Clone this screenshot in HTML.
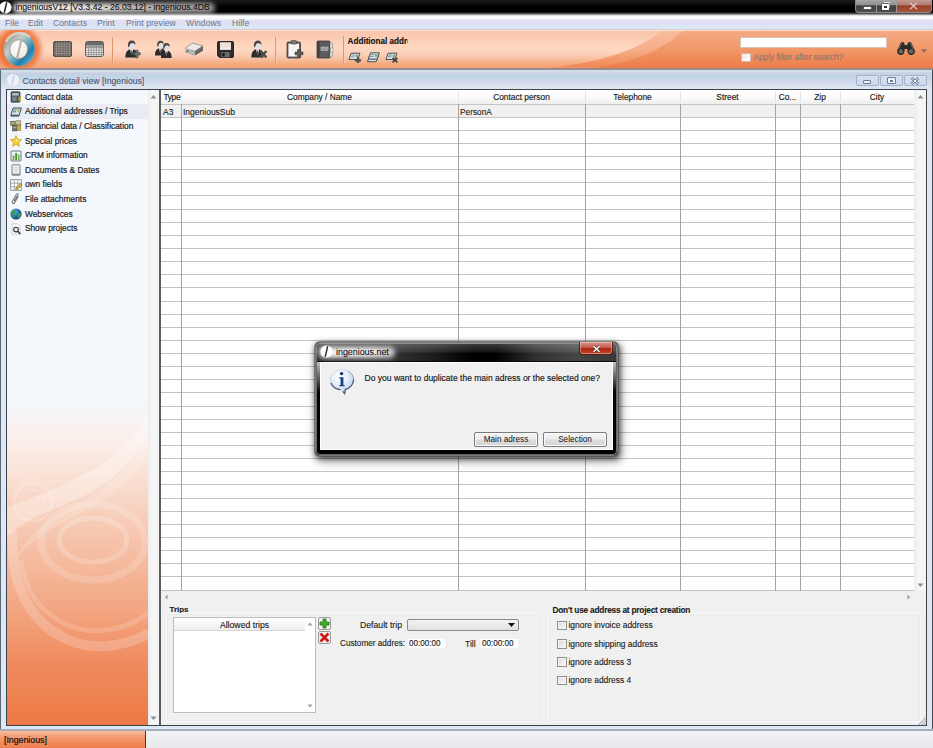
<!DOCTYPE html>
<html>
<head>
<meta charset="utf-8">
<title>ingeniousV12</title>
<style>
*{box-sizing:border-box;margin:0;padding:0}
html,body{width:933px;height:748px;overflow:hidden}
body{position:relative;-webkit-font-smoothing:antialiased;background:#eef0f2;font-family:"Liberation Sans",sans-serif;font-size:8.6px;color:#1a1a1a}
.a{position:absolute}
.t{position:absolute;white-space:nowrap;line-height:12px;-webkit-text-stroke:0.12px currentColor}
#titlebar{left:0;top:0;width:933px;height:16px;background:linear-gradient(#1a1a1a 0,#0a0a0a 5px,#000 6px,#000 12px,#2e2e2e 13px,#7d7d7d 14.2px,#d6d6d8 15.3px,#fbfbfd 16px)}
#titletext{left:15.5px;top:1px;font-size:8.65px;color:#1a1010}
#menubar{left:0;top:16px;width:933px;height:14px;background:linear-gradient(#fdfdfe 0,#f8f9fc 3px,#e2e2f6 4px,#dfdef5 8px,#dbe6f4 9px,#dce7f5 12.6px,#c9c9cc 13.2px,#f0d4d0 14px)}
#menubar span{position:absolute;top:1px;font-size:8.65px;line-height:12px;color:#6b788c;white-space:nowrap}
#toolbar{left:0;top:30px;width:933px;height:38px;overflow:hidden;background:#f5a57c}
#mdi{left:0;top:69.5px;width:933px;height:661px;background:#dde7f5}
#status{left:0;top:730.8px;width:933px;height:17.2px;background:linear-gradient(#f2f3f5,#e6e8eb)}
#statusl{left:0;top:730.8px;width:145.6px;height:17.2px;background:linear-gradient(#f9bd9d 0,#f29468 45%,#ee7f4d 100%);border-right:1px solid #3a3a3a}
#leftpanel{left:7.2px;top:90px;width:140.8px;height:634.8px;overflow:hidden;background:linear-gradient(#f4f7fc 0,#f4f7fc 49%,#fbeee8 55.7%,#f9dccd 62.6%,#f6c7b0 69.5%,#f4b596 76.5%,#f2a17b 83.4%,#ef8b5e 90.4%,#ed7e4c 97.3%,#ed7a47 100%)}
.it{position:absolute;left:0;width:142px;height:15px;font-size:8.4px;line-height:15px;padding-left:17.7px;color:#1c1c1c;white-space:nowrap;-webkit-text-stroke:0.2px #1c1c1c}
.hd{position:absolute;top:90px;height:13px;font-size:8.35px;line-height:14px;text-align:center;color:#1a1a1a;white-space:nowrap;-webkit-text-stroke:0.15px #1a1a1a}
.hl{position:absolute;background:#c4c4c4;height:1px}
.vl{position:absolute;background:#a4a4a4;width:1px}
.cb{position:absolute;width:9.8px;height:9.6px;border:1px solid #8e8f8f;background:linear-gradient(135deg,#d6d6d6 0,#e6e6e6 40%,#fbfbfb 100%);box-shadow:inset 0 0 0 1px #f4f4f4}
.btn{position:absolute;height:15px;border:1px solid #7a7a7a;border-radius:2px;background:linear-gradient(#f4f4f4 0,#ececec 48%,#dedede 52%,#d2d2d2 100%);font-size:8.2px;line-height:13px;text-align:center;color:#111;box-shadow:inset 0 0 0 1px #fbfbfb}
</style>
</head>
<body>
<div id="titlebar" class="a"></div>
<div class="a" style="left:13px;top:2.5px;width:202px;height:10px;border-radius:5px;filter:blur(2.5px);background:linear-gradient(90deg,rgba(255,255,255,0.98) 0,rgba(255,255,255,0.95) 30%,rgba(255,255,255,0.75) 60%,rgba(255,255,255,0.6) 100%)"></div>
<svg class="a" style="left:-1px;top:1px" width="13" height="13" viewBox="0 0 13 13"><circle cx="6.5" cy="6.5" r="6" fill="#fff"/><path d="M7.8 1.2 L5.2 11.8" stroke="#222" stroke-width="1.5"/></svg>
<div id="titletext" class="t">ingeniousV12 [V3.3.42 - 26.03.12] - ingenious.4DB</div>
<div class="a" style="left:855px;top:0;width:77px;height:12.5px;border:1px solid #8a8a8a;border-top:none;border-radius:0 0 4px 4px;background:linear-gradient(#a9a9a9 0,#8c8c8c 42%,#3f3f3f 48%,#4d4d4d 100%)"></div>
<div class="a" style="left:896px;top:0;width:35px;height:11.5px;border-radius:0 0 3px 0;background:linear-gradient(#c39a92 0,#ad7a70 42%,#9a3f2a 48%,#a8523a 100%)"></div>
<div class="a" style="left:876px;top:0;width:1px;height:12px;background:#9a9a9a"></div><div class="a" style="left:896px;top:0;width:1px;height:12px;background:#9a9a9a"></div>
<div class="a" style="left:862.5px;top:5.5px;width:9px;height:4px;background:#fff;border:1px solid #555;border-radius:1px"></div>
<div class="a" style="left:884px;top:2px;width:6px;height:6px;border:1px solid #e8e8e8;background:#777"></div><div class="a" style="left:881.5px;top:3.5px;width:7.5px;height:6.5px;border:2px solid #fff;background:#333;box-shadow:0 0 0 0.5px #444"></div>
<svg class="a" style="left:909px;top:2px" width="9" height="8" viewBox="0 0 9 8"><path d="M1 0.8 L8 7.2 M8 0.8 L1 7.2" stroke="#e9c3b8" stroke-width="1.2"/></svg>
<div id="menubar" class="a"><span style="left:5px">File</span><span style="left:28px">Edit</span><span style="left:53px">Contacts</span><span style="left:97px">Print</span><span style="left:126px">Print preview</span><span style="left:186px">Windows</span><span style="left:232px">Hilfe</span></div>
<div id="toolbar" class="a"><svg class="a" style="left:0;top:0" width="933" height="39" viewBox="0 0 933 39">
<defs>
<linearGradient id="tl" x1="0" y1="0" x2="0" y2="1"><stop offset="0" stop-color="#f7cdc2"/><stop offset="0.04" stop-color="#f9c6ae"/><stop offset="0.16" stop-color="#fbcab1"/><stop offset="0.32" stop-color="#fdd2ba"/><stop offset="0.5" stop-color="#fed7c0"/><stop offset="0.63" stop-color="#fbcfb7"/><stop offset="0.74" stop-color="#f8bfa0"/><stop offset="0.85" stop-color="#f6ae84"/><stop offset="0.93" stop-color="#f5a574"/><stop offset="0.97" stop-color="#f4a58a"/><stop offset="1" stop-color="#f2a594"/></linearGradient>
<linearGradient id="tr" x1="0" y1="0" x2="0" y2="1"><stop offset="0" stop-color="#f5ab86"/><stop offset="0.5" stop-color="#f19768"/><stop offset="1" stop-color="#ec7b47"/></linearGradient>
<linearGradient id="tm" x1="0" y1="0" x2="0" y2="1"><stop offset="0" stop-color="#f8bd9f"/><stop offset="0.5" stop-color="#f6ad88"/><stop offset="0.93" stop-color="#ef8a58"/><stop offset="1" stop-color="#f09a80"/></linearGradient>
</defs>
<rect width="933" height="39" fill="url(#tr)"/>
<path d="M0 0 H684 C660 22 630 34 585 39 H0 Z" fill="url(#tm)"/>
<path d="M0 0 H662 C640 20 600 33 540 39 H0 Z" fill="url(#tl)"/>
<rect y="0" width="933" height="1" fill="#fde6da" opacity="0.8"/>
</svg></div>
<svg class="a" style="left:0;top:30px" width="48" height="38" viewBox="0 0 48 38">
<defs>
<radialGradient id="og" cx="18" cy="19.5" r="27" gradientUnits="userSpaceOnUse"><stop offset="0.6" stop-color="#ee7336"/><stop offset="0.74" stop-color="#f0814a" stop-opacity="0.95"/><stop offset="0.9" stop-color="#f4a07a" stop-opacity="0.5"/><stop offset="1" stop-color="#f8bfa0" stop-opacity="0"/></radialGradient>
<linearGradient id="rg" x1="0.1" y1="0.1" x2="0.9" y2="0.9"><stop offset="0" stop-color="#8d8f86"/><stop offset="0.3" stop-color="#c9cdc8"/><stop offset="0.5" stop-color="#7fb6c4"/><stop offset="0.75" stop-color="#1e7fae"/><stop offset="1" stop-color="#6fb0c8"/></linearGradient>
<radialGradient id="wg" cx="0.45" cy="0.4" r="0.7"><stop offset="0" stop-color="#ffffff"/><stop offset="0.7" stop-color="#f2efe9"/><stop offset="1" stop-color="#c9c7c0"/></radialGradient>
</defs>
<rect x="0" y="0" width="48" height="38" fill="url(#og)"/>
<ellipse cx="19.3" cy="19.3" rx="15.6" ry="17" fill="url(#rg)"/>
<ellipse cx="19.3" cy="19.3" rx="15.6" ry="17" fill="none" stroke="#b0a090" stroke-opacity="0.6" stroke-width="1"/>
<path d="M6 12 A15 15 0 0 1 30 7" fill="none" stroke="#e8ebe8" stroke-opacity="0.6" stroke-width="2.5"/>
<ellipse cx="18.7" cy="19.3" rx="9" ry="9.6" fill="url(#wg)" stroke="#8a8a84" stroke-width="0.8"/>
<path d="M21.2 10.5 L17 29" stroke="#b9b6ae" stroke-width="2.2"/>
</svg>
<svg class="a" style="left:53px;top:41px" width="19" height="16" viewBox="0 0 19 16">
<rect x="0.5" y="0.5" width="18" height="15" rx="1.5" fill="#6a6460" stroke="#55504c"/>
<g stroke="#9a9490" stroke-width="0.8" opacity="0.9"><path d="M3.5 1 V15 M6.1 1 V15 M8.7 1 V15 M11.3 1 V15 M13.9 1 V15 M16.5 1 V15"/><path d="M1 3.3 H18 M1 5.6 H18 M1 7.9 H18 M1 10.2 H18 M1 12.5 H18"/></g>
</svg>
<svg class="a" style="left:85px;top:41px" width="19" height="16" viewBox="0 0 19 16">
<rect x="0.5" y="0.5" width="18" height="15" rx="2" fill="#f4f1ee" stroke="#5a5a5a"/>
<rect x="1" y="1" width="17" height="3.2" fill="#6a6a6a"/>
<rect x="1" y="4.2" width="17" height="2.4" fill="#9b9b9b"/>
<g stroke="#8a8a8a" stroke-width="0.8"><path d="M3.6 4.2 V15 M6.2 4.2 V15 M8.8 4.2 V15 M11.4 4.2 V15 M14 4.2 V15 M16.4 4.2 V15"/><path d="M1 6.8 H18 M1 9.2 H18 M1 11.6 H18 M1 13.6 H18"/></g>
</svg>
<div class="a" style="left:112px;top:37px;width:1px;height:26px;background:#e59572"></div><div class="a" style="left:113px;top:37px;width:1px;height:26px;background:#fbd2be;opacity:0.7"></div><div class="a" style="left:275px;top:37px;width:1px;height:26px;background:#e59572"></div><div class="a" style="left:276px;top:37px;width:1px;height:26px;background:#fbd2be;opacity:0.7"></div><div class="a" style="left:343px;top:36px;width:1px;height:27px;background:#e59572"></div><div class="a" style="left:344px;top:36px;width:1px;height:27px;background:#fbd2be;opacity:0.7"></div>
<svg class="a" style="left:125px;top:40px" width="16" height="19" viewBox="0 0 16 19"><path d="M0.4 17.4 C0.2 12.6 2.2 10 5 9.2 L6.6 11.5 L8.2 9.2 C11 10 12.8 12.6 12.6 17.4 Z" fill="#2b2b2b"/>
<path d="M5 9.2 L6.6 15.5 L8.2 9.2 L6.6 10.4 Z" fill="#ececec"/>
<path d="M6.2 10.6 L7 10.6 L7.3 14 L6.6 15.2 L5.9 14 Z" fill="#555"/>
<ellipse cx="6.7" cy="5.2" rx="3.5" ry="4.2" fill="#e4e2e0"/>
<path d="M3.1 6.4 C2.4 2.4 4.4 0.5 6.9 0.5 C9.6 0.5 10.8 2.6 10.2 5 C9.6 3.6 8.4 3 6.8 3.2 C5.4 3.4 4.6 4.4 4.4 6.6 L3.6 7.6 Z" fill="#4e4642"/>
<path d="M10.6 10.2 H13 V12.6 H15.2 V15 H13 V17.8 H10.6 V15 H8.4 V12.6 H10.6 Z" fill="#66736c" stroke="#3e4642" stroke-width="0.6"/></svg>
<svg class="a" style="left:153.5px;top:40px" width="19" height="19" viewBox="0 0 19 19">
<g transform="translate(0.6,0.2) scale(0.88)"><path d="M0.4 17.4 C0.2 12.6 2.2 10 5 9.2 L6.6 11.5 L8.2 9.2 C11 10 12.8 12.6 12.6 17.4 Z" fill="#2b2b2b"/>
<path d="M5 9.2 L6.6 15.5 L8.2 9.2 L6.6 10.4 Z" fill="#ececec"/>
<path d="M6.2 10.6 L7 10.6 L7.3 14 L6.6 15.2 L5.9 14 Z" fill="#555"/>
<ellipse cx="6.7" cy="5.2" rx="3.5" ry="4.2" fill="#e4e2e0"/>
<path d="M3.1 6.4 C2.4 2.4 4.4 0.5 6.9 0.5 C9.6 0.5 10.8 2.6 10.2 5 C9.6 3.6 8.4 3 6.8 3.2 C5.4 3.4 4.6 4.4 4.4 6.6 L3.6 7.6 Z" fill="#4e4642"/></g>
<g transform="translate(6.6,2.6) scale(0.88)"><path d="M0.4 17.4 C0.2 12.6 2.2 10 5 9.2 L6.6 11.5 L8.2 9.2 C11 10 12.8 12.6 12.6 17.4 Z" fill="#2b2b2b"/>
<path d="M5 9.2 L6.6 15.5 L8.2 9.2 L6.6 10.4 Z" fill="#ececec"/>
<path d="M6.2 10.6 L7 10.6 L7.3 14 L6.6 15.2 L5.9 14 Z" fill="#555"/>
<ellipse cx="6.7" cy="5.2" rx="3.5" ry="4.2" fill="#e4e2e0"/>
<path d="M3.1 6.4 C2.4 2.4 4.4 0.5 6.9 0.5 C9.6 0.5 10.8 2.6 10.2 5 C9.6 3.6 8.4 3 6.8 3.2 C5.4 3.4 4.6 4.4 4.4 6.6 L3.6 7.6 Z" fill="#4e4642"/></g></svg>
<svg class="a" style="left:184px;top:42px" width="20" height="14" viewBox="0 0 20 14">
<path d="M1 6.5 L8.5 1 L19 4 L19 8.5 L11 13.2 L1 10 Z" fill="#4a4a4a"/>
<path d="M1 6.5 L8.5 1 L19 4 L11 9.2 Z" fill="#eceae8" stroke="#8a8a8a" stroke-width="0.6"/>
<path d="M1 6.5 L11 9.2 L11 13.2 L1 10 Z" fill="#b9b7b4"/>
<path d="M11 9.2 L19 4 L19 8.5 L11 13.2 Z" fill="#6a6866"/>
<circle cx="3.5" cy="9.2" r="0.9" fill="#5a5a5a"/>
</svg>
<svg class="a" style="left:217px;top:41px" width="17" height="17" viewBox="0 0 17 17">
<path d="M1.5 0.5 H15.5 A1 1 0 0 1 16.5 1.5 V15.5 A1 1 0 0 1 15.5 16.5 H2.5 L0.5 14.5 V1.5 A1 1 0 0 1 1.5 0.5 Z" fill="#2c2c2c" stroke="#111" stroke-width="0.8"/>
<rect x="3" y="1.3" width="11" height="7.6" fill="#f6e9e2"/>
<path d="M3 3.5 H14 M3 5.5 H14" stroke="#e4cfc4" stroke-width="0.6"/>
<rect x="4.2" y="11" width="8.4" height="5.2" fill="#6d6d6d"/>
<rect x="5.3" y="11.8" width="2.4" height="3.6" fill="#1a1a1a"/>
</svg>
<svg class="a" style="left:250.5px;top:40px" width="17" height="19" viewBox="0 0 17 19"><path d="M0.4 17.4 C0.2 12.6 2.2 10 5 9.2 L6.6 11.5 L8.2 9.2 C11 10 12.8 12.6 12.6 17.4 Z" fill="#2b2b2b"/>
<path d="M5 9.2 L6.6 15.5 L8.2 9.2 L6.6 10.4 Z" fill="#ececec"/>
<path d="M6.2 10.6 L7 10.6 L7.3 14 L6.6 15.2 L5.9 14 Z" fill="#555"/>
<ellipse cx="6.7" cy="5.2" rx="3.5" ry="4.2" fill="#e4e2e0"/>
<path d="M3.1 6.4 C2.4 2.4 4.4 0.5 6.9 0.5 C9.6 0.5 10.8 2.6 10.2 5 C9.6 3.6 8.4 3 6.8 3.2 C5.4 3.4 4.6 4.4 4.4 6.6 L3.6 7.6 Z" fill="#4e4642"/>
<path d="M9.4 11 L15.4 17.4 M15.4 11 L9.4 17.4" stroke="#4a4f4c" stroke-width="2.5"/></svg>
<svg class="a" style="left:286px;top:40px" width="18" height="19" viewBox="0 0 18 19">
<rect x="1" y="2" width="13.5" height="16" rx="1.2" fill="#5a5a5a" stroke="#3c3c3c" stroke-width="0.8"/>
<rect x="2.4" y="3.6" width="10.7" height="13" fill="#f7f4f1"/>
<rect x="5" y="0.6" width="5.6" height="3.4" rx="0.8" fill="#7a7a7a" stroke="#3c3c3c" stroke-width="0.6"/>
<path d="M11.5 9.5 H14.3 V12 H17 V14.8 H14.3 V17.5 H11.5 V14.8 H9 V12 H11.5 Z" fill="#5c5c5c" stroke="#3a3a3a" stroke-width="0.6"/>
</svg>
<svg class="a" style="left:316px;top:40px" width="18" height="19" viewBox="0 0 18 19">
<path d="M2 1 H13 A1 1 0 0 1 14 2 V17 A1 1 0 0 1 13 18 H2 A1 1 0 0 1 1 17 V2 A1 1 0 0 1 2 1 Z" fill="#5b5b5b" stroke="#3a3a3a" stroke-width="0.8"/>
<path d="M14 2.5 L16.5 3.5 V16 L14 17.5 Z" fill="#e8e6e3" stroke="#6a6a6a" stroke-width="0.5"/>
<rect x="1.5" y="1.5" width="2" height="16" fill="#3e3e3e"/>
<rect x="5" y="7" width="7" height="3.6" fill="#9a9a9a" stroke="#c8c8c8" stroke-width="0.5"/>
<path d="M14.5 8 H17 V12 H14.5 Z" fill="#f4f2ef" stroke="#777" stroke-width="0.5"/>
</svg>
<div class="t" style="left:347.6px;top:36.3px;width:60.6px;overflow:hidden;font-size:8.15px;font-weight:bold;color:#111">Additional addre</div>
<svg class="a" style="left:348px;top:52px" width="14" height="11" viewBox="0 0 14 11"><path d="M1 7.5 L3.2 1.2 L12 1.2 L9.8 7.5 Z" fill="#d7e6ee" stroke="#4c4c4c" stroke-width="1"/>
<path d="M3.6 3 H7 M3 4.8 H6.4" stroke="#6a7f8c" stroke-width="0.8"/><rect x="7.6" y="2.6" width="2.6" height="2.6" fill="#8aa86a"/>
<path d="M9 5.6 H11 V7.4 H12.8 V9.2 H11 V10.8 H9 V9.2 H7.2 V7.4 H9 Z" fill="#555" stroke="#333" stroke-width="0.4"/></svg><svg class="a" style="left:366px;top:52px" width="14" height="11" viewBox="0 0 14 11"><g transform="translate(0.5,2.2)"><path d="M1 7.5 L3.2 1.2 L12 1.2 L9.8 7.5 Z" fill="#d7e6ee" stroke="#4c4c4c" stroke-width="1"/>
<path d="M3.6 3 H7 M3 4.8 H6.4" stroke="#6a7f8c" stroke-width="0.8"/><rect x="7.6" y="2.6" width="2.6" height="2.6" fill="#8aa86a"/></g><g transform="translate(1.4,-0.4)"><path d="M1 7.5 L3.2 1.2 L12 1.2 L9.8 7.5 Z" fill="#d7e6ee" stroke="#4c4c4c" stroke-width="1"/>
<path d="M3.6 3 H7 M3 4.8 H6.4" stroke="#6a7f8c" stroke-width="0.8"/><rect x="7.6" y="2.6" width="2.6" height="2.6" fill="#8aa86a"/></g></svg><svg class="a" style="left:384.5px;top:52px" width="14" height="11" viewBox="0 0 14 11"><path d="M1 7.5 L3.2 1.2 L12 1.2 L9.8 7.5 Z" fill="#d7e6ee" stroke="#4c4c4c" stroke-width="1"/>
<path d="M3.6 3 H7 M3 4.8 H6.4" stroke="#6a7f8c" stroke-width="0.8"/><rect x="7.6" y="2.6" width="2.6" height="2.6" fill="#8aa86a"/>
<path d="M7.6 5.8 L12.4 10.4 M12.4 5.8 L7.6 10.4" stroke="#3e3e3e" stroke-width="1.7"/></svg>
<div class="a" style="left:740.4px;top:36.5px;width:146.8px;height:11px;background:#fff;border:1px solid #d9c3b6"></div><div class="a" style="left:741.3px;top:52.8px;width:9.4px;height:9.4px;border:1px solid #d8b8a8;background:linear-gradient(135deg,#f6e8e0,#ffffff)"></div><div class="t" style="left:753.4px;top:51px;font-size:8.33px;color:#8c786e">Apply filter after search?</div>
<svg class="a" style="left:896px;top:41px" width="20" height="15" viewBox="0 0 20 15">
<path d="M5 1.2 H8 L8.6 4 H11.4 L12 1.2 H15 L18.8 9.5 A3.7 3.7 0 1 1 11.5 10.5 L11.3 8 H8.7 L8.5 10.5 A3.7 3.7 0 1 1 1.2 9.5 Z" fill="#2b2b2b"/>
<circle cx="4.9" cy="10.4" r="2.2" fill="#6a6a6a"/><circle cx="15.1" cy="10.4" r="2.2" fill="#6a6a6a"/>
<path d="M5.6 2 L3 8 M14.4 2 L17 8" stroke="#777" stroke-width="0.8"/>
</svg><svg class="a" style="left:921px;top:49px" width="6" height="4" viewBox="0 0 6 4"><path d="M0 0.3 H6 L3 3.7 Z" fill="#8a6a5a"/></svg>
<div id="mdi" class="a"></div>
<div class="a" style="left:0;top:68px;width:933px;height:1.5px;background:#9a8c8d"></div>
<div class="a" style="left:1px;top:69.5px;width:931px;height:19.5px;background:linear-gradient(#d2e2ea 0,#d0dfe8 1.2px,#c9cde5 3.8px,#bed8e3 7px,#cfd4ea 10px,#d5e0ee 13.8px,#dde5f0 17.7px,#dfe7f2 19.5px)"></div><div class="a" style="left:0;top:69.5px;width:1px;height:661px;background:#5a6872"></div><div class="a" style="left:932px;top:69.5px;width:1px;height:661px;background:#454b54"></div>
<svg class="a" style="left:6px;top:73px" width="14" height="14" viewBox="0 0 14 14"><circle cx="7" cy="7" r="6" fill="#eef2f8"/><path d="M8 2 L6 12" stroke="#c9d3e2" stroke-width="1.6"/></svg>
<div class="t" style="left:22.5px;top:74.5px;font-size:8.67px;color:#4a5a72">Contacts detail view [Ingenious]</div>
<div class="a" style="left:856px;top:74.6px;width:22.5px;height:11.8px;border:1px solid #a6b2cb;border-radius:2px;background:linear-gradient(#d9e2f2,#cdd6ec)"></div><div class="a" style="left:880px;top:74.6px;width:22.5px;height:11.8px;border:1px solid #a6b2cb;border-radius:2px;background:linear-gradient(#d9e2f2,#cdd6ec)"></div><div class="a" style="left:904px;top:74.6px;width:22.5px;height:11.8px;border:1px solid #a6b2cb;border-radius:2px;background:linear-gradient(#d9e2f2,#cdd6ec)"></div><div class="a" style="left:863px;top:80px;width:8px;height:4px;border:1px solid #6b7c96;border-radius:1px;background:#eef3fa"></div><div class="a" style="left:887px;top:77px;width:9px;height:7px;border:1px solid #6b7c96;border-radius:1px;background:#eef3fa"></div><div class="a" style="left:890px;top:80px;width:3px;height:2px;background:#6b7c96"></div><svg class="a" style="left:910px;top:77px" width="10" height="8" viewBox="0 0 10 8"><path d="M1.5 1 L8.5 7 M8.5 1 L1.5 7" stroke="#6b7c96" stroke-width="2.6"/><path d="M1.5 1 L8.5 7 M8.5 1 L1.5 7" stroke="#eef3fa" stroke-width="1"/></svg>
<div class="a" style="left:6px;top:88.6px;width:921.3px;height:637.4px;background:#3d424b"></div>
<div class="a" style="left:7.2px;top:90px;width:918.6px;height:634.8px;background:#f0f0f0"></div>
<div id="leftpanel" class="a"><svg class="a" style="left:0;top:0" width="142" height="637" viewBox="0 0 142 637">
<g fill="#fff">
<path d="M142 316 C124 372 64 392 0 418 L0 446 C30 420 70 415 100 392 C125 372 138 355 142 340 Z" fill-opacity="0.30"/>
<path d="M142 340 C130 380 90 405 60 420 C40 430 20 445 8 470 C30 440 80 425 110 400 C128 385 138 370 142 358 Z" fill-opacity="0.16"/>
</g>
<g fill="none" stroke="#fff">
<circle cx="26" cy="412" r="19" stroke-width="3" stroke-opacity="0.18"/>
<circle cx="26" cy="412" r="12" stroke-width="2" stroke-opacity="0.14"/>
<ellipse cx="86" cy="450" rx="34" ry="22" stroke-width="5" stroke-opacity="0.20"/>
<ellipse cx="86" cy="452" rx="52" ry="38" stroke-width="7" stroke-opacity="0.16"/>
<path d="M6 440 C0 520 50 560 100 556 C125 553 138 546 142 542" stroke-width="10" stroke-opacity="0.20"/>
<path d="M14 470 C20 520 60 545 100 540 C122 537 136 528 142 522" stroke-width="5" stroke-opacity="0.16"/>
<path d="M0 380 C30 395 60 398 90 380" stroke-width="3" stroke-opacity="0.12"/>
</g></svg><div class="it" style="top:-0.4px">Contact data</div><div class="it" style="top:14.2px;background:#e9edf3">Additional addresses / Trips</div><div class="it" style="top:28.8px">Financial data / Classification</div><div class="it" style="top:43.5px">Special prices</div><div class="it" style="top:58.1px">CRM information</div><div class="it" style="top:72.7px">Documents &amp; Dates</div><div class="it" style="top:87.3px">own fields</div><div class="it" style="top:101.9px">File attachments</div><div class="it" style="top:116.6px">Webservices</div><div class="it" style="top:131.2px">Show projects</div></div>
<svg class="a" style="left:10px;top:91.1px" width="12" height="12" viewBox="0 0 12 12"><rect x="1" y="0.8" width="9" height="10.4" rx="0.8" fill="#4f5a5f" stroke="#2f3437" stroke-width="0.7"/><rect x="2.2" y="2" width="6.6" height="2.6" fill="#aebcc4"/><rect x="2.2" y="5.6" width="4.4" height="4.4" fill="#6f8896"/><rect x="8.6" y="5.6" width="2.4" height="4.6" fill="#b6a93a"/></svg><svg class="a" style="left:10px;top:105.7px" width="12" height="12" viewBox="0 0 12 12"><path d="M0.8 9.3 L3 2 L11.4 2 L9.2 9.3 Z" fill="#cfe3ee" stroke="#3d4a52" stroke-width="1"/><path d="M3.6 4 H6.6 M3 5.8 H6" stroke="#50748a" stroke-width="0.9"/><rect x="7.4" y="3.4" width="2.4" height="2.6" fill="#a7bf4a"/><path d="M0.8 9.3 L9.2 9.3 L9 10.6 L0.9 10.6 Z" fill="#39434a"/></svg><svg class="a" style="left:10px;top:120.3px" width="12" height="12" viewBox="0 0 12 12"><rect x="0.6" y="1.2" width="4.6" height="4" fill="#8a8a5a" stroke="#55553a" stroke-width="0.5"/><rect x="5.8" y="0.8" width="5" height="4.2" fill="#b9b08a" stroke="#6a654a" stroke-width="0.5"/><rect x="2.4" y="5.4" width="4.4" height="5.6" fill="#6f7a6a" stroke="#444" stroke-width="0.5"/><rect x="7" y="5.4" width="3.8" height="5.2" fill="#c8b24a" stroke="#7a6a2a" stroke-width="0.5"/><path d="M1 3 H5 M6 2.6 H10.6 M3 7.6 H6.4" stroke="#e8e4c8" stroke-width="0.6"/></svg><svg class="a" style="left:10px;top:135.0px" width="12" height="12" viewBox="0 0 12 12"><path d="M6 0.6 L7.7 4.3 L11.6 4.7 L8.7 7.4 L9.5 11.3 L6 9.3 L2.5 11.3 L3.3 7.4 L0.4 4.7 L4.3 4.3 Z" fill="#f3cf3a" stroke="#c89a1a" stroke-width="0.7"/><path d="M6 2.4 L7 4.9 L9.4 5.2 L6 6.5 Z" fill="#fbeb9a"/></svg><svg class="a" style="left:10px;top:149.6px" width="12" height="12" viewBox="0 0 12 12"><rect x="1" y="1" width="10" height="10" rx="0.8" fill="#f2f5f1" stroke="#5a6a7a" stroke-width="0.9"/><rect x="2.6" y="5.5" width="1.8" height="4.6" fill="#6aa84a"/><rect x="5.2" y="3" width="1.8" height="7.1" fill="#4f8f3a"/><rect x="7.8" y="4.4" width="1.8" height="5.7" fill="#7ab85a"/></svg><svg class="a" style="left:10px;top:164.2px" width="12" height="12" viewBox="0 0 12 12"><rect x="2" y="0.8" width="8" height="10.4" rx="0.6" fill="#f4f5f6" stroke="#6a7078" stroke-width="0.9"/><path d="M3.6 3.2 H8.4 M3.6 5.2 H8.4 M3.6 7.2 H8.4" stroke="#b4bac2" stroke-width="0.7"/><path d="M2 9.6 H10 V11.2 H2 Z" fill="#8a9098"/></svg><svg class="a" style="left:10px;top:178.8px" width="12" height="12" viewBox="0 0 12 12"><rect x="0.7" y="0.7" width="10.6" height="10.6" fill="#fbfbfb" stroke="#7a828c" stroke-width="0.8"/><path d="M4.2 0.7 V11.3 M7.8 0.7 V11.3 M0.7 4.2 H11.3 M0.7 7.8 H11.3" stroke="#8a929c" stroke-width="0.7"/><path d="M5.6 10.6 L6.4 8.2 L10.4 4.6 L11.8 6 L7.8 9.8 Z" fill="#e8c23a" stroke="#6a5a1a" stroke-width="0.6"/></svg><svg class="a" style="left:10px;top:193.4px" width="12" height="12" viewBox="0 0 12 12"><path d="M8.8 1.4 C7.6 0.4 6.4 1 5.8 2.2 L2.4 8.4 C1.6 10 3.4 11.4 4.6 9.8 L8 3.8 C8.5 2.9 7.4 2.4 7 3.2 L4.2 8.2" fill="none" stroke="#6f7780" stroke-width="1.1"/></svg><svg class="a" style="left:10px;top:208.1px" width="12" height="12" viewBox="0 0 12 12"><defs><radialGradient id="gl" cx="0.35" cy="0.3" r="0.8"><stop offset="0" stop-color="#5fb0e6"/><stop offset="0.6" stop-color="#1b62a8"/><stop offset="1" stop-color="#0c3a70"/></radialGradient></defs><circle cx="6" cy="6" r="5.6" fill="url(#gl)"/><path d="M3 2.6 C4.6 1.6 6 2.4 5.6 4 C5.2 5.4 3.6 5 3.4 6.6 C3.2 8 4.6 8.6 4.4 10.2 C2.4 9.4 1 7.4 1.2 5.2 C1.4 4 2 3.2 3 2.6 Z M7.6 5 C8.8 4.4 10.4 5 10.8 6.4 C10.6 8 9.6 9.6 8 10.4 C7.4 9 8.4 8 7.6 7 C7 6.2 6.8 5.4 7.6 5 Z" fill="#3f9a4a"/></svg><svg class="a" style="left:10px;top:222.7px" width="12" height="12" viewBox="0 0 12 12"><path d="M2 0.8 H7.6 L10 3.2 V11.2 H2 Z" fill="#fafafa" stroke="#b8bcc2" stroke-width="0.7"/><circle cx="6" cy="6.6" r="2.3" fill="#eaf2f8" stroke="#3a3a3a" stroke-width="1.1"/><path d="M7.8 8.4 L10.4 11" stroke="#3a3a3a" stroke-width="1.5"/></svg>
<div class="a" style="left:148px;top:90px;width:11.3px;height:634.8px;background:linear-gradient(90deg,#ececec,#f7f7f7 40%,#f4f4f4)"></div>
<div class="a" style="left:159.3px;top:90px;width:1.6px;height:634.8px;background:#5a5e64"></div>
<svg class="a" style="left:150px;top:94px" width="7" height="5" viewBox="0 0 7 5"><path d="M0.5 4.5 L3.5 1 L6.5 4.5 Z" fill="#8a8f96"/></svg><svg class="a" style="left:150px;top:716px" width="7" height="5" viewBox="0 0 7 5"><path d="M0.5 0.5 L3.5 4 L6.5 0.5 Z" fill="#7c8da4"/></svg>
<div class="a" style="left:160.9px;top:90px;width:753.1px;height:501px;background:#fff"></div>
<div class="a" style="left:160.9px;top:90px;width:753.1px;height:13.5px;background:linear-gradient(#fff 0,#fbfbfb 50%,#efefef 100%)"></div>
<div class="a" style="left:161px;top:104px;width:753px;height:13px;background:#f0f0f0"></div>
<div class="hl" style="left:161px;top:103.50px;width:753px"></div><div class="hl" style="left:161px;top:116.64px;width:753px"></div><div class="hl" style="left:161px;top:129.77px;width:753px"></div><div class="hl" style="left:161px;top:142.91px;width:753px"></div><div class="hl" style="left:161px;top:156.04px;width:753px"></div><div class="hl" style="left:161px;top:169.18px;width:753px"></div><div class="hl" style="left:161px;top:182.31px;width:753px"></div><div class="hl" style="left:161px;top:195.44px;width:753px"></div><div class="hl" style="left:161px;top:208.58px;width:753px"></div><div class="hl" style="left:161px;top:221.72px;width:753px"></div><div class="hl" style="left:161px;top:234.85px;width:753px"></div><div class="hl" style="left:161px;top:247.98px;width:753px"></div><div class="hl" style="left:161px;top:261.12px;width:753px"></div><div class="hl" style="left:161px;top:274.25px;width:753px"></div><div class="hl" style="left:161px;top:287.39px;width:753px"></div><div class="hl" style="left:161px;top:300.52px;width:753px"></div><div class="hl" style="left:161px;top:313.66px;width:753px"></div><div class="hl" style="left:161px;top:326.79px;width:753px"></div><div class="hl" style="left:161px;top:339.93px;width:753px"></div><div class="hl" style="left:161px;top:353.06px;width:753px"></div><div class="hl" style="left:161px;top:366.20px;width:753px"></div><div class="hl" style="left:161px;top:379.33px;width:753px"></div><div class="hl" style="left:161px;top:392.47px;width:753px"></div><div class="hl" style="left:161px;top:405.61px;width:753px"></div><div class="hl" style="left:161px;top:418.74px;width:753px"></div><div class="hl" style="left:161px;top:431.88px;width:753px"></div><div class="hl" style="left:161px;top:445.01px;width:753px"></div><div class="hl" style="left:161px;top:458.14px;width:753px"></div><div class="hl" style="left:161px;top:471.28px;width:753px"></div><div class="hl" style="left:161px;top:484.42px;width:753px"></div><div class="hl" style="left:161px;top:497.55px;width:753px"></div><div class="hl" style="left:161px;top:510.69px;width:753px"></div><div class="hl" style="left:161px;top:523.82px;width:753px"></div><div class="hl" style="left:161px;top:536.95px;width:753px"></div><div class="hl" style="left:161px;top:550.09px;width:753px"></div><div class="hl" style="left:161px;top:563.22px;width:753px"></div><div class="hl" style="left:161px;top:576.36px;width:753px"></div><div class="hl" style="left:161px;top:589.50px;width:753px"></div>
<div class="vl" style="left:181px;top:104px;height:487px"></div><div class="vl" style="left:181px;top:91px;height:12px;background:#e4e4e4"></div><div class="vl" style="left:458px;top:104px;height:487px"></div><div class="vl" style="left:458px;top:91px;height:12px;background:#e4e4e4"></div><div class="vl" style="left:585px;top:104px;height:487px"></div><div class="vl" style="left:585px;top:91px;height:12px;background:#e4e4e4"></div><div class="vl" style="left:680px;top:104px;height:487px"></div><div class="vl" style="left:680px;top:91px;height:12px;background:#e4e4e4"></div><div class="vl" style="left:775px;top:104px;height:487px"></div><div class="vl" style="left:775px;top:91px;height:12px;background:#e4e4e4"></div><div class="vl" style="left:800px;top:104px;height:487px"></div><div class="vl" style="left:800px;top:91px;height:12px;background:#e4e4e4"></div><div class="vl" style="left:840px;top:104px;height:487px"></div><div class="vl" style="left:840px;top:91px;height:12px;background:#e4e4e4"></div>
<div class="hd" style="left:163.5px;text-align:left;letter-spacing:-0.35px">Type</div><div class="hd" style="left:181px;width:277px">Company / Name</div><div class="hd" style="left:458px;width:127px">Contact person</div><div class="hd" style="left:585px;width:95px">Telephone</div><div class="hd" style="left:680px;width:95px">Street</div><div class="hd" style="left:775px;width:25px">Co...</div><div class="hd" style="left:800px;width:40px">Zip</div><div class="hd" style="left:840px;width:74px">City</div>
<div class="t" style="left:163px;top:105.5px;font-size:8.5px;line-height:13px">A3</div><div class="t" style="left:183px;top:105.5px;font-size:8.5px;line-height:13px">IngeniousSub</div><div class="t" style="left:460px;top:105.5px;font-size:8.3px;line-height:13px">PersonA</div>
<div class="a" style="left:914px;top:90px;width:11.8px;height:501px;background:linear-gradient(90deg,#ececec,#f7f7f7 40%,#f4f4f4)"></div><div class="a" style="left:160.9px;top:591px;width:764.9px;height:12px;background:#f0f0f0"></div><svg class="a" style="left:917px;top:94px" width="7" height="5" viewBox="0 0 7 5"><path d="M0.5 4.5 L3.5 1 L6.5 4.5 Z" fill="#8a8f96"/></svg><svg class="a" style="left:917px;top:583px" width="7" height="5" viewBox="0 0 7 5"><path d="M0.5 0.5 L3.5 4 L6.5 0.5 Z" fill="#8a8f96"/></svg><svg class="a" style="left:164px;top:593.5px" width="4" height="6" viewBox="0 0 5 7"><path d="M4.5 0.5 L1 3.5 L4.5 6.5 Z" fill="#9a9ea4"/></svg><svg class="a" style="left:906.5px;top:593.5px" width="4" height="6" viewBox="0 0 5 7"><path d="M0.5 0.5 L4 3.5 L0.5 6.5 Z" fill="#9a9ea4"/></svg>
<div class="t" style="left:169.5px;top:603.5px;font-size:7.95px;font-weight:bold">Trips</div>
<div class="a" style="left:166px;top:613px;width:377px;height:109px;border:1px solid #f9f9f9;border-radius:3px;box-shadow:inset 1px 1px 0 #e9e9e9,inset -1px -1px 0 #e9e9e9"></div><div class="a" style="left:547.5px;top:613px;width:373px;height:109px;border:1px solid #f9f9f9;border-radius:3px;box-shadow:inset 1px 1px 0 #e9e9e9,inset -1px -1px 0 #e9e9e9"></div>
<div class="a" style="left:173px;top:617px;width:143px;height:96px;border:1px solid #bdbdbd;background:#fff"></div><div class="a" style="left:174px;top:618px;width:131px;height:13px;background:linear-gradient(#fff,#eeeeee);border-bottom:1px solid #d5d5d5"></div><div class="t" style="left:174px;top:619px;width:141px;text-align:center;font-size:8.7px">Allowed trips</div><svg class="a" style="left:307px;top:622px" width="6" height="4" viewBox="0 0 6 4"><path d="M0.5 3.5 L3 0.5 L5.5 3.5 Z" fill="#9a9fa6"/></svg><svg class="a" style="left:307px;top:704px" width="6" height="4" viewBox="0 0 6 4"><path d="M0.5 0.5 L3 3.5 L5.5 0.5 Z" fill="#9a9fa6"/></svg>
<div class="a" style="left:318px;top:617px;width:13px;height:13px;border:1px solid #9c9c9c;border-radius:2px;background:#f1f1f1"></div><svg class="a" style="left:319px;top:618px" width="11" height="11" viewBox="0 0 11 11"><path d="M4 1 H7 V4 H10 V7 H7 V10 H4 V7 H1 V4 H4 Z" fill="#3fae2a" stroke="#1f7a10" stroke-width="0.8"/></svg><div class="a" style="left:318px;top:631px;width:13px;height:13px;border:1px solid #9c9c9c;border-radius:2px;background:#f1f1f1"></div><svg class="a" style="left:319px;top:632px" width="11" height="11" viewBox="0 0 11 11"><path d="M1.5 1.5 L9.5 9.5 M9.5 1.5 L1.5 9.5" stroke="#d01818" stroke-width="2.6"/></svg>
<div class="t" style="left:360px;top:619px;font-size:8.7px">Default trip</div><div class="a" style="left:407px;top:619px;width:112px;height:12px;border:1px solid #8a8a8a;border-radius:2px;background:linear-gradient(#f3f3f3,#e2e2e2)"></div><svg class="a" style="left:508px;top:623px" width="7" height="4" viewBox="0 0 7 4"><path d="M0 0 H7 L3.5 4 Z" fill="#111"/></svg><div class="t" style="left:340px;top:637.5px;font-size:8.2px">Customer addres:</div><div class="a" style="left:407px;top:638px;width:39px;height:11px;background:#fff;border:1px solid #f2f2f2"></div><div class="t" style="left:409px;top:637.5px;font-size:8.15px">00:00:00</div><div class="t" style="left:465px;top:637.5px;font-size:8.5px">Till</div><div class="a" style="left:480px;top:638px;width:39px;height:11px;background:#fff;border:1px solid #f2f2f2"></div><div class="t" style="left:482px;top:637.5px;font-size:8.15px">00:00:00</div>
<div class="t" style="left:552.5px;top:603.5px;font-size:8.3px;font-weight:bold;letter-spacing:-0.22px">Don't use address at project creation</div>
<div class="cb" style="left:557px;top:620.8px"></div><div class="t" style="left:568.5px;top:619.3px;font-size:8.42px">ignore invoice address</div><div class="cb" style="left:557px;top:639.1px"></div><div class="t" style="left:568.5px;top:637.6px;font-size:8.42px">ignore shipping address</div><div class="cb" style="left:557px;top:657.4px"></div><div class="t" style="left:568.5px;top:655.9px;font-size:8.42px">ignore address 3</div><div class="cb" style="left:557px;top:675.7px"></div><div class="t" style="left:568.5px;top:674.2px;font-size:8.42px">ignore address 4</div>
<svg class="a" style="left:917px;top:716px" width="10" height="10" viewBox="0 0 10 10"><path d="M9.5 1 L1 9.5 M9.5 4 L4 9.5 M9.5 7 L7 9.5" stroke="#8a8f98" stroke-width="1"/></svg>
<div class="a" style="left:0;top:729.4px;width:933px;height:1.4px;background:#a4aebd"></div><div id="status" class="a"></div><div id="statusl" class="a"></div><div class="t" style="left:4px;top:733.5px;font-size:8.76px;color:#111;-webkit-text-stroke:0.2px #111">[Ingenious]</div>
<div class="a" style="left:315px;top:342px;width:303px;height:114px;border-radius:5px;background:#111;box-shadow:0 0 0 1px rgba(80,80,80,0.55),1px 2px 5px 1px rgba(0,0,0,0.55),2px 4px 10px 2px rgba(0,0,0,0.35)"></div>
<div class="a" style="left:315px;top:342px;width:303px;height:114px;border-radius:5px;border:1px solid #777;background:linear-gradient(#5a5a5a 0,#3c3c3c 6%,#070707 12%,#000 100%)"></div>
<div class="a" style="left:316px;top:343px;width:301px;height:112px;border-radius:4px;border:1px solid rgba(190,190,190,0.55)"></div>
<div class="a" style="left:317px;top:344px;width:299px;height:17px;border-radius:3px 3px 0 0;background:linear-gradient(100deg,rgba(255,255,255,0.2) 0,rgba(255,255,255,0.2) 25%,rgba(255,255,255,0.12) 38%,rgba(255,255,255,0) 52%,rgba(255,255,255,0) 60%,rgba(255,255,255,0.2) 74%,rgba(255,255,255,0.27) 86%,rgba(255,255,255,0.22) 100%),linear-gradient(#3a3a3a 0,#161616 45%,#000 55%,#000 100%)"></div>
<div class="a" style="left:319px;top:346.5px;width:76px;height:11px;border-radius:5px;filter:blur(2.5px);background:linear-gradient(90deg,rgba(255,255,255,0.95) 0,rgba(255,255,255,0.92) 70%,rgba(255,255,255,0.7) 100%)"></div>
<div class="a" style="left:317px;top:362px;width:3px;height:30px;background:linear-gradient(rgba(255,255,255,0.75),rgba(255,255,255,0))"></div><div class="a" style="left:613px;top:362px;width:3px;height:30px;background:linear-gradient(rgba(255,255,255,0.75),rgba(255,255,255,0))"></div>
<svg class="a" style="left:320px;top:345px" width="13" height="13" viewBox="0 0 13 13"><circle cx="6.5" cy="6.5" r="6" fill="#fff"/><path d="M7.7 1.2 L5.2 11.8" stroke="#222" stroke-width="1.4"/></svg>
<div class="t" style="left:336px;top:346px;font-size:8.9px;color:#1a1010">ingenious.net</div>
<div class="a" style="left:579px;top:342px;width:33.5px;height:13.2px;border:1px solid #5a1d16;border-top:none;border-radius:0 0 4px 4px;background:linear-gradient(#d89488 0,#c66052 45%,#ad2614 50%,#b8341a 80%,#c64c2a 100%);box-shadow:inset 0 0 0 1px rgba(255,255,255,0.35)"></div><svg class="a" style="left:591.5px;top:344.5px" width="9" height="8" viewBox="0 0 10 9"><path d="M1.6 1.4 L8.4 7.6 M8.4 1.4 L1.6 7.6" stroke="#4a2a2a" stroke-width="3"/><path d="M1.6 1.4 L8.4 7.6 M8.4 1.4 L1.6 7.6" stroke="#fff" stroke-width="1.8"/></svg>
<div class="a" style="left:320px;top:362px;width:293px;height:88px;background:#f0f0f0;border:1px solid #fff"></div>
<svg class="a" style="left:328px;top:367px" width="28" height="28" viewBox="0 0 28 28">
<defs><radialGradient id="ig" cx="0.4" cy="0.3" r="0.8"><stop offset="0" stop-color="#ffffff"/><stop offset="0.45" stop-color="#e4eefa"/><stop offset="1" stop-color="#a9c4e6"/></radialGradient></defs>
<path d="M13.8 2.6 C20.4 2.6 25.6 7 25.6 12.6 C25.6 17.4 22 21.2 17.4 22.4 L16.6 26.6 L13.4 22.8 C6.8 22.6 2.4 18 2.4 12.6 C2.4 7 7.4 2.6 13.8 2.6 Z" fill="url(#ig)" stroke="#c4d4ea" stroke-width="0.8"/>
<path d="M25.6 12.6 C25.6 17.4 22 21.2 17.4 22.4 L16.6 26.6 L15.2 24.8 M12 22.6 C8 22 4.6 19.6 3.2 16.4" fill="none" stroke="#34465e" stroke-width="1.3" stroke-linecap="round" stroke-opacity="0.85"/>
<path d="M25.6 12.6 C25.6 9 23.4 5.8 20 4.2" fill="none" stroke="#6a7f9c" stroke-width="0.9" stroke-opacity="0.6"/>
<circle cx="13.6" cy="6.6" r="1.7" fill="#152a6a"/>
<path d="M11.2 10.2 H15.4 V18 H16.6 V19.2 H11.4 V18 H12.6 V11.6 H11.2 Z" fill="#1c3c90"/>
</svg>
<div class="t" style="left:364.6px;top:372px;font-size:8.5px;color:#151515;-webkit-text-stroke:0.15px #151515">Do you want to duplicate the main adress or the selected one?</div>
<div class="btn" style="left:474px;top:431.5px;width:64px">Main adress</div><div class="btn" style="left:543px;top:431.5px;width:64px">Selection</div>
</body>
</html>
